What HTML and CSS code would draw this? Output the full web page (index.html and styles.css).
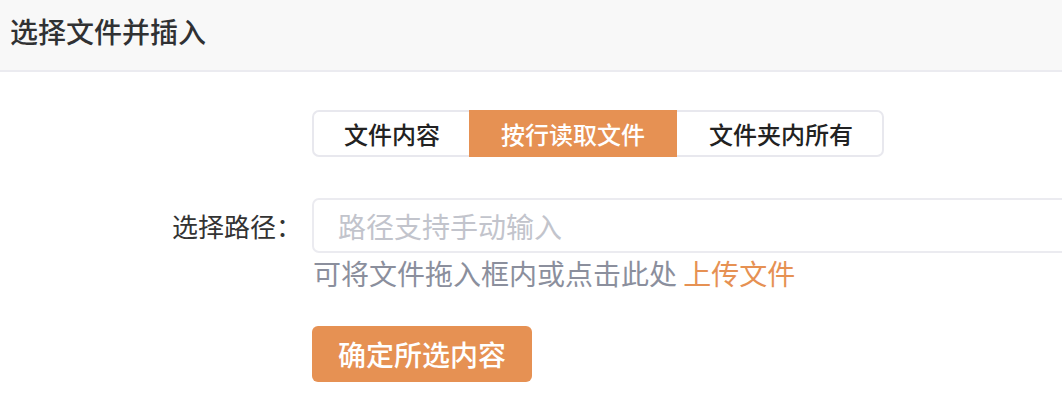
FILE: index.html
```html
<!DOCTYPE html>
<html lang="zh-CN">
<head>
<meta charset="utf-8">
<title>选择文件并插入</title>
<link rel="stylesheet" href="styles.css">
</head>
<body>
<div class="page">
  <header class="header">
    <h1 class="title">选择文件并插入</h1>
  </header>
  <main class="main">
    <div class="row">
      <div class="label-col"></div>
      <div class="segmented">
        <button class="seg seg-first">文件内容</button>
        <button class="seg seg-active">按行读取文件</button>
        <button class="seg seg-last">文件夹内所有</button>
      </div>
    </div>
    <div class="row row-path">
      <label class="label-col label">选择路径：</label>
      <div class="field">
        <input class="input" type="text" placeholder="路径支持手动输入">
        <div class="hint">可将文件拖入框内或点击此处 <span class="link">上传文件</span></div>
        <button class="primary">确定所选内容</button>
      </div>
    </div>
  </main>
</div>
</body>
</html>
```

FILE: styles.css
```css
* { box-sizing: border-box; }
html, body {
  margin: 0;
  padding: 0;
  background: #ffffff;
  overflow: hidden;
}
body {
  font-family: "Noto Sans CJK SC", "Noto Sans", sans-serif;
  color: #303133;
}
.page {
  width: 1062px;
  height: 402px;
  overflow: hidden;
}
.header {
  height: 72px;
  background: #f8f8f8;
  border-bottom: 2px solid #ebebf0;
  padding: 11px 0 0 10px;
}
.title {
  margin: 0;
  font-size: 28px;
  line-height: 40px;
  font-weight: 500;
  color: #303133;
}
.main {
  padding-top: 38px;
}
.row {
  display: flex;
  align-items: flex-start;
}
.label-col {
  flex: 0 0 312px;
  width: 312px;
}
.segmented {
  display: flex;
  height: 47px;
}
.seg {
  border: none;
  background: #ffffff;
  font-family: inherit;
  font-size: 24px;
  font-weight: 500;
  color: #222222;
  margin: 0;
  height: 47px;
  line-height: 43px;
  cursor: pointer;
}
.seg-first {
  border: 2px solid #e8e8ee;
  border-right: none;
  border-radius: 7px 0 0 7px;
  padding: 0 29px 0 30px;
}
.seg-active {
  background: #e69153;
  color: #ffffff;
  padding: 0 32px;
}
.seg-last {
  border: 2px solid #e8e8ee;
  border-left: none;
  border-radius: 0 7px 7px 0;
  padding: 0 29px 0 32px;
}
.row-path {
  margin-top: 41px;
}
.label {
  font-size: 26px;
  line-height: 55px;
  text-align: right;
  padding-right: 10px;
  color: #333333;
}
.field {
  flex: 0 0 auto;
  display: flex;
  flex-direction: column;
  align-items: flex-start;
}
.input {
  width: 800px;
  height: 55px;
  border: 2px solid #ebebf0;
  border-radius: 7px;
  padding: 0 24px;
  font-family: inherit;
  font-size: 28px;
  color: #303133;
  outline: none;
}
.input::placeholder {
  color: #c2c4cc;
}
.hint {
  font-size: 28px;
  line-height: 40px;
  color: #8b8f9d;
  padding-left: 1px;
}
.link {
  color: #e69153;
}
.primary {
  margin-top: 33px;
  height: 56px;
  padding: 0 26px;
  border: none;
  border-radius: 6px;
  background: #e69153;
  color: #ffffff;
  font-family: inherit;
  font-size: 28px;
  font-weight: 500;
  cursor: pointer;
}
```
